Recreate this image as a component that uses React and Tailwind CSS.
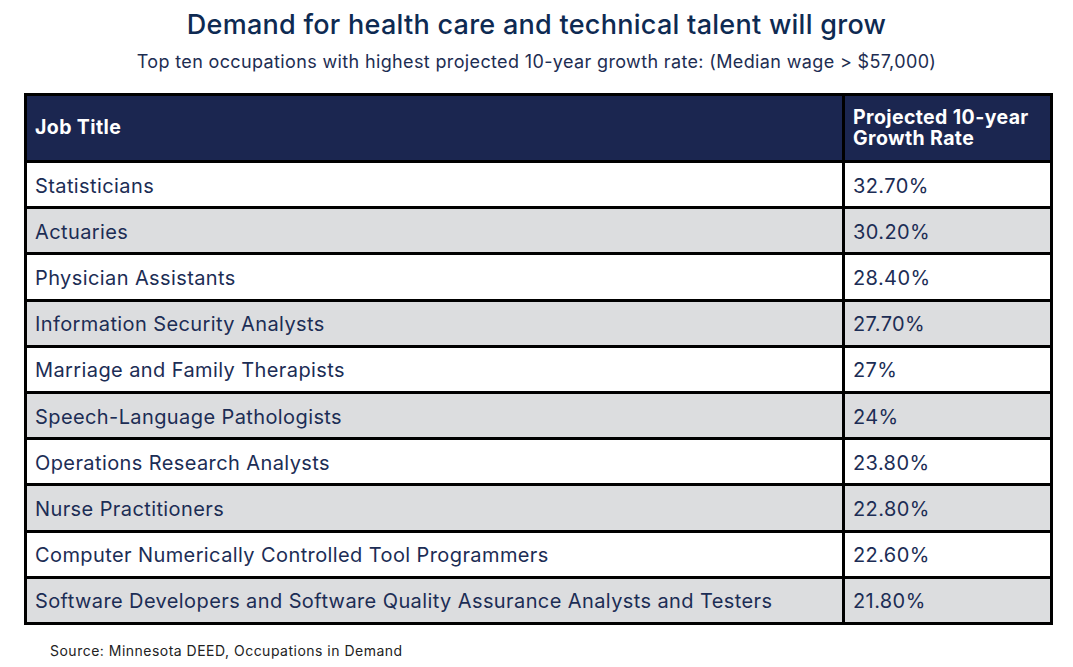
const rows = [
  ["Statisticians", "32.70%"],
  ["Actuaries", "30.20%"],
  ["Physician Assistants", "28.40%"],
  ["Information Security Analysts", "27.70%"],
  ["Marriage and Family Therapists", "27%"],
  ["Speech-Language Pathologists", "24%"],
  ["Operations Research Analysts", "23.80%"],
  ["Nurse Practitioners", "22.80%"],
  ["Computer Numerically Controlled Tool Programmers", "22.60%"],
  ["Software Developers and Software Quality Assurance Analysts and Testers", "21.80%"],
];

export default function App() {
  return (
    <div
      className="w-[1073px] h-[667px] bg-white overflow-hidden"
      style={{ fontFamily: "Inter, 'Noto Sans', sans-serif" }}
    >
      <div className="pt-[8px] text-center">
        <h1 className="text-[27px] leading-[34px] font-medium tracking-[0.01em] text-[#0e2a52]">
          Demand for health care and technical talent will grow
        </h1>
        <p className="mt-[9px] text-[18px] leading-[22px] tracking-[0.02em] text-[#1d2d52]">
          Top ten occupations with highest projected 10-year growth rate: (Median wage &gt; $57,000)
        </p>
      </div>

      <div className="ml-[24px] mt-[20px] w-[1029px] border-[3px] border-black">
        <div className="grid grid-cols-[815px_3px_1fr] h-[64px] bg-[#1b2650] text-white font-bold">
          <div className="flex items-center pl-[8px] text-[19.5px] tracking-[0.02em]">Job Title</div>
          <div className="bg-black" />
          <div className="flex flex-col justify-center pl-[8px] text-[19.5px] leading-[21px] tracking-[0.02em]">
            <span>Projected 10-year</span>
            <span>Growth Rate</span>
          </div>
        </div>
        {rows.map(([job, rate], i) => (
          <div
            key={job}
            className={
              "grid grid-cols-[815px_3px_1fr] h-[46.2px] border-t-[3px] border-black text-[20px] tracking-[0.02em] text-[#1c2d55] " +
              (i % 2 === 1 ? "bg-[#dcdddf]" : "bg-white")
            }
          >
            <div className="flex items-center pl-[8px] pt-[2px]">{job}</div>
            <div className="bg-black" />
            <div className="flex items-center pl-[8px] pt-[2px]">{rate}</div>
          </div>
        ))}
      </div>

      <p className="ml-[50px] mt-[15px] text-[14px] tracking-[0.035em] text-[#222]">
        Source: Minnesota DEED, Occupations in Demand
      </p>
    </div>
  );
}
